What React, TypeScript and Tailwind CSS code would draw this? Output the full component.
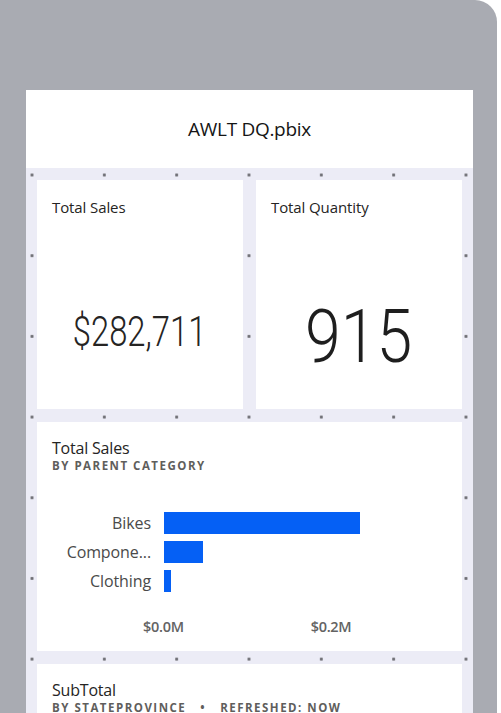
const bars = [
  { label: 'Bikes', width: 196 },
  { label: 'Compone...', width: 39 },
  { label: 'Clothing', width: 7 },
]

function Card({ title, value, valueClass }: { title: string; value: string; valueClass: string }) {
  return (
    <div className="bg-white h-[229px] flex flex-col px-[15px] pt-[16px]">
      <div className="text-[15px] text-[#252423] tracking-[-0.1px]">{title}</div>
      <div className="flex-1 flex items-center justify-center pt-[40px]">
        <span className={valueClass}>{value}</span>
      </div>
    </div>
  )
}

function Subtitle({ children }: { children: React.ReactNode }) {
  return (
    <div className="text-[11.5px] leading-[16px] font-bold tracking-[1.5px] text-[#5f5e5c] flex gap-[14px] whitespace-nowrap">
      {children}
    </div>
  )
}

function BarChart() {
  return (
    <div className="bg-white h-[229px] px-[15px] pt-[17px]">
      <div className="text-[16px] leading-[19px] text-[#252423] tracking-[-0.2px]">Total Sales</div>
      <Subtitle>
        <span>BY PARENT CATEGORY</span>
      </Subtitle>
      <div className="mt-[38px] flex flex-col gap-[7px]">
        {bars.map((b) => (
          <div key={b.label} className="flex items-center h-[22px]">
            <div className="w-[99px] text-right text-[16px] text-[#4a4a4a] tracking-[-0.1px] whitespace-nowrap">{b.label}</div>
            <div className="ml-[13px] h-[22px] bg-[#0560f5]" style={{ width: b.width }} />
          </div>
        ))}
      </div>
      <div className="mt-[24px] flex text-[14.5px] font-semibold text-[#636363] tracking-[-0.3px]">
        <span className="ml-[91px]">$0.0M</span>
        <span className="ml-[127px]">$0.2M</span>
      </div>
    </div>
  )
}

export default function App() {
  return (
    <div className="w-[501px] h-[713px] overflow-hidden bg-white" style={{ fontFamily: '"Open Sans", "Noto Sans", sans-serif' }}>
      <div className="w-[497px] h-[713px] bg-[#a9abb2] rounded-tr-[22px] pt-[90px] pl-[26px]">
        <div className="w-[447px] h-[623px] flex flex-col overflow-hidden">
          <header className="h-[78px] shrink-0 bg-white flex items-center justify-center">
            <h1 className="text-[19px] text-[#151515] tracking-[-0.3px]">AWLT DQ.pbix</h1>
          </header>
          <main className="flex-1 bg-[#ececf6] bg-[radial-gradient(circle,#6f6f75_1.3px,transparent_1.8px)] bg-[size:72.33px_80.7px] bg-[position:-30.17px_-33.35px] px-[11px] pt-[12px] flex flex-col gap-[13px]">
            <div className="grid grid-cols-2 gap-[13px]">
              <Card
                title="Total Sales"
                value="$282,711"
                valueClass="block font-['Roboto'] font-light text-[#252423] text-[42px] leading-none scale-x-[0.78] -translate-y-[2px]"
              />
              <Card
                title="Total Quantity"
                value="915"
                valueClass="block font-['Roboto'] font-light text-[#1e1e1e] text-[74px] leading-none scale-x-[0.87] translate-y-[3px]"
              />
            </div>
            <BarChart />
            <div className="bg-white h-[229px] px-[15px] pt-[17px]">
              <div className="text-[16px] leading-[19px] text-[#252423] tracking-[-0.2px]">SubTotal</div>
              <Subtitle>
                <span>BY STATEPROVINCE</span>
                <span>•</span>
                <span>REFRESHED: NOW</span>
              </Subtitle>
            </div>
          </main>
        </div>
      </div>
    </div>
  )
}
